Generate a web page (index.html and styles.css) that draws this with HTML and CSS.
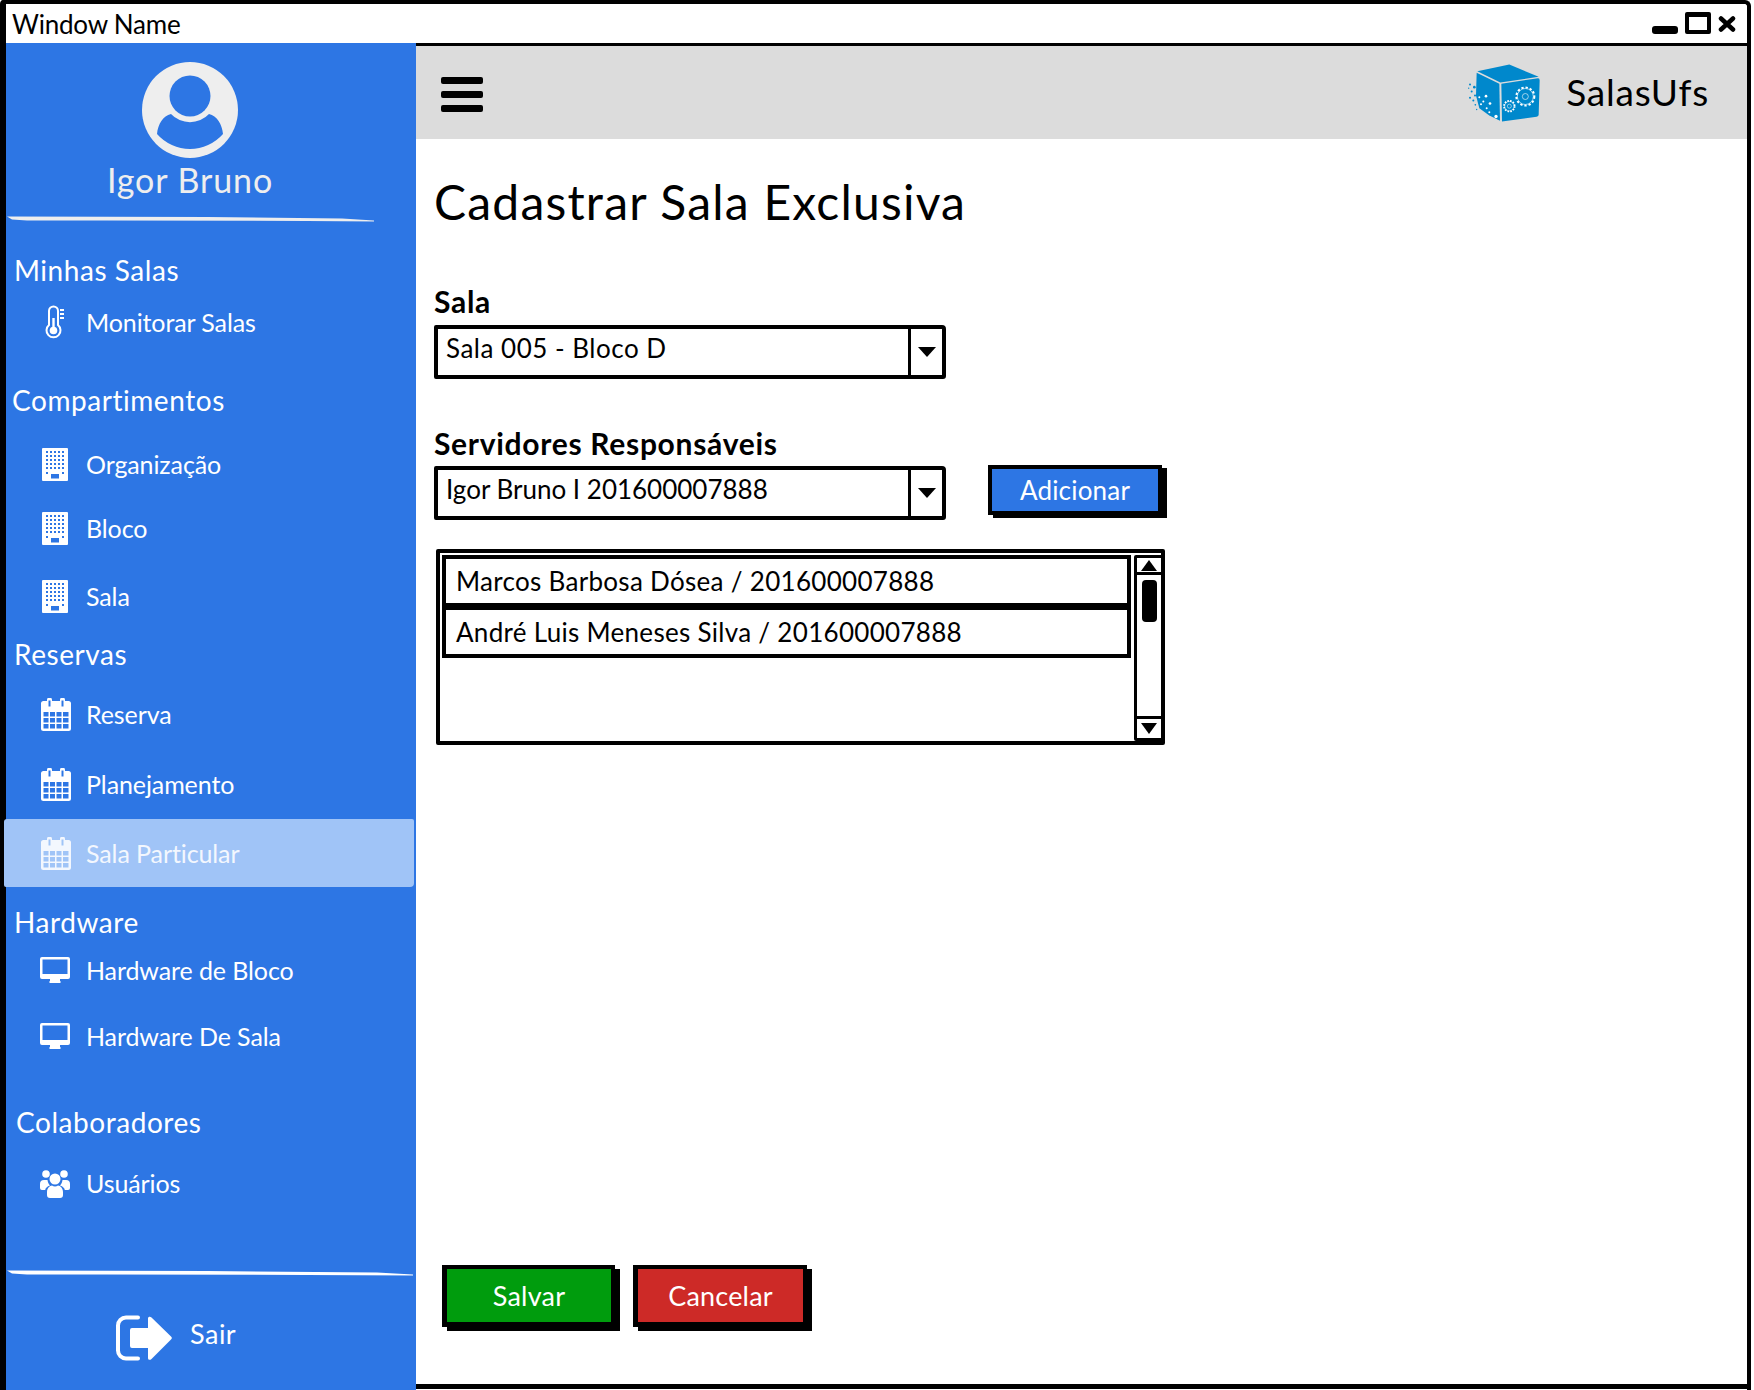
FILE: index.html
```html
<!DOCTYPE html>
<html lang="en">
  <head>
    <meta charset="UTF-8" />
    <title>SalasUfs - Cadastrar Sala Exclusiva</title>
    <link rel="stylesheet" href="styles.css">
  </head>
  <body>
    <svg class="defs" width="0" height="0">
      <defs>
        <pattern id="windows" width="4" height="4" patternUnits="userSpaceOnUse" x="4" y="3">
          <rect width="2" height="2" fill="#2d76e4" />
        </pattern>
      </defs>
      <symbol id="i-thermo" viewBox="0 0 20 34">
        <path d="M3 20V6a4.500 4.500 0 0 1 9 0V20a7 7 0 1 1-9 0z" fill="none" stroke="currentColor" stroke-width="2" />
        <circle cx="7.500" cy="25.500" r="3.800" fill="currentColor" />
        <path d="M7.500 24V13" stroke="currentColor" stroke-width="2.400" />
        <path d="M14 5h4M14 9h4M14 13h4" stroke="currentColor" stroke-width="1.800" />
      </symbol>
      <symbol id="i-building" viewBox="0 0 26 33">
        <rect width="26" height="33" rx="1" fill="currentColor" />
        <rect x="4" y="3" width="18" height="18" fill="url(#windows)" />
        <rect x="4" y="24" width="2" height="2" fill="#2d76e4" />
        <rect x="20" y="24" width="2" height="2" fill="#2d76e4" />
        <rect x="9" y="26" width="8" height="4.500" fill="#2d76e4" />
      </symbol>
      <symbol id="i-calendar" viewBox="0 0 30 33">
        <path fill="currentColor" fill-rule="evenodd" d="M2.500 3H6V2a2 2 0 0 1 5 0V3h8V2a2 2 0 0 1 5 0V3h3.500A2.500 2.500 0 0 1 30 5.500V30.500A2.500 2.500 0 0 1 27.500 33H2.500A2.500 2.500 0 0 1 0 30.500V5.500A2.500 2.500 0 0 1 2.500 3zM7.500 2.500V8.500h2V2.500zM20.500 2.500V8.500h2V2.500zM2.500 14h5v4.500h-5zM9 14h5v4.500H9zM15.500 14h5v4.500h-5zM22 14h5.500v4.500H22zM2.500 20h5v4.500h-5zM9 20h5v4.500H9zM15.500 20h5v4.500h-5zM22 20h5.500v4.500H22zM2.500 26h5v4.500h-5zM9 26h5v4.500H9zM15.500 26h5v4.500h-5zM22 26h5.500v4.500H22z" />
      </symbol>
      <symbol id="i-monitor" viewBox="0 0 30 26">
        <path fill="currentColor" fill-rule="evenodd" d="M2 0H28a2 2 0 0 1 2 2V20a2 2 0 0 1-2 2H20V24h0.500V26h-11V24H10V22H2a2 2 0 0 1-2-2V2a2 2 0 0 1 2-2zM2.500 2.500V17H27.500V2.500z" />
      </symbol>
      <symbol id="i-users" viewBox="0 0 30 28">
        <g fill="currentColor">
          <circle cx="6" cy="4" r="3.800" />
          <circle cx="24" cy="4" r="3.800" />
          <circle cx="15" cy="9" r="5.500" />
          <path d="M0 14a4 4 0 0 1 4-4H7.500C7.800 12 8.500 14 10 15.500 7 16.500 5.500 18 5.200 20H2a2 2 0 0 1-2-2zM30 14a4 4 0 0 0-4-4H22.500C22.200 12 21.500 14 20 15.500 23 16.500 24.500 18 24.800 20H28a2 2 0 0 0 2-2z" />
          <path d="M7 22c0-3.500 2.500-6.500 5-6.500 1.800 1.300 4.200 1.300 6 0 2.500 0 5 3 5 6.500v3a3 3 0 0 1-3 3H10a3 3 0 0 1-3-3z" />
        </g>
      </symbol>
      <symbol id="i-exit" viewBox="0 0 56 46">
        <path d="M22 2.500H10a8 8 0 0 0-8 8V35.500a8 8 0 0 0 8 8H22" fill="none" stroke="currentColor" stroke-width="4" stroke-linecap="round" />
        <path fill="currentColor" d="M16 13H32V3.500C32 1.500 34 1 35.500 2.500L55 21.500a2 2 0 0 1 0 3L35.500 44C34 45.500 32 45 32 43V33H16a2 2 0 0 1-2-2V15a2 2 0 0 1 2-2z" />
      </symbol>
    </svg>

    <div class="window">
      <div class="titlebar">
        <span class="window-name">Window Name</span>
        <div class="window-controls">
          <span class="ctl-min"></span>
          <span class="ctl-max"></span>
          <svg class="ctl-close" viewBox="0 0 18 16" width="18" height="16">
            <path d="M3 2.500L15 13.500M15 2.500L3 13.500" stroke="#000" stroke-width="4.500" stroke-linecap="round" />
          </svg>
        </div>
      </div>

      <div class="window-body">
        <aside class="sidebar">
          <div class="profile">
            <svg class="avatar" viewBox="-48 -48 96 96" width="96" height="96">
              <circle r="48" fill="#eeeeee" />
              <circle cx="0" cy="-14" r="20.500" fill="#2d76e4" />
              <path fill="#2d76e4" d="M-33 24C-32 14-27 6-19 4A26 26 0 0 0 19 4C27 6 32 14 33 24A44 44 0 0 1-33 24Z" />
            </svg>
            <div class="profile-name">Igor Bruno</div>
          </div>
          <svg class="rule" viewBox="0 0 367 6" width="367" height="6" preserveAspectRatio="none">
            <path d="M0 0.500L200 1 335 2.500 367 4.500V5.500L300 5 100 4.500 20 4.500 5 3.500Z" fill="#eeeeee" />
          </svg>

          <nav class="nav">
            <div class="nav-head first">Minhas Salas</div>
            <a class="nav-item mt-14"><svg class="ico ico-thermo"><use href="#i-thermo" /></svg>Monitorar Salas</a>

            <div class="nav-head mt-40 shift-left">Compartimentos</div>
            <a class="nav-item mt-26"><svg class="ico ico-building"><use href="#i-building" /></svg>Organização</a>
            <a class="nav-item mt-24"><svg class="ico ico-building"><use href="#i-building" /></svg>Bloco</a>
            <a class="nav-item mt-28"><svg class="ico ico-building"><use href="#i-building" /></svg>Sala</a>

            <div class="nav-head mt-20">Reservas</div>
            <a class="nav-item mt-22"><svg class="ico"><use href="#i-calendar" /></svg>Reserva</a>
            <a class="nav-item mt-30"><svg class="ico"><use href="#i-calendar" /></svg>Planejamento</a>
            <a class="nav-item active mt-15"><svg class="ico"><use href="#i-calendar" /></svg>Sala Particular</a>

            <div class="nav-head mt-17">Hardware</div>
            <a class="nav-item mt-10"><svg class="ico ico-monitor"><use href="#i-monitor" /></svg>Hardware de Bloco</a>
            <a class="nav-item mt-26"><svg class="ico ico-monitor"><use href="#i-monitor" /></svg>Hardware De Sala</a>

            <div class="nav-head mt-48 shift-right">Colaboradores</div>
            <a class="nav-item mt-23"><svg class="ico ico-users"><use href="#i-users" /></svg>Usuários</a>
          </nav>

          <div class="sidebar-foot">
            <svg class="rule" viewBox="0 0 406 6" width="406" height="6" preserveAspectRatio="none">
              <path d="M0 0.500L200 1 370 2.500 406 4.500V5.500L300 5 100 4.500 20 4.500 5 3.500Z" fill="#ffffff" />
            </svg>
            <a class="logout"><svg class="ico-exit"><use href="#i-exit" /></svg><span class="logout-text">Sair</span></a>
          </div>
        </aside>

        <main class="main">
          <header class="topbar">
            <div class="burger"><span></span><span></span><span></span></div>
            <div class="brand">
              <svg class="brand-logo" viewBox="200 180 225 185" width="75" height="62">
                <path d="M234 207L330 187 418 224 303 241Z" fill="#0088cc" />
                <path d="M232 212L300 245 302 356 270 340 240 318 230 280Z" fill="#0088cc" />
                <path d="M306 245L416 228Q421 228 421 234L418 338Q418 343 412 344L308 358Z" fill="#0088cc" />
                <g fill="#0088cc">
                  <circle cx="225" cy="255" r="4" /><circle cx="212" cy="247" r="3" /><circle cx="217" cy="268" r="3" />
                  <circle cx="212" cy="287" r="3" /><circle cx="222" cy="295" r="3" /><circle cx="227" cy="280" r="3" />
                  <circle cx="228" cy="308" r="2.500" /><circle cx="208" cy="258" r="2" /><circle cx="232" cy="322" r="2" />
                </g>
                <g fill="#ffffff">
                  <circle cx="260" cy="282" r="4" /><circle cx="240" cy="285" r="3" /><circle cx="252" cy="298" r="3" />
                  <circle cx="272" cy="304" r="4" /><circle cx="245" cy="306" r="3" /><circle cx="262" cy="318" r="3" />
                  <circle cx="290" cy="343" r="5" /><circle cx="270" cy="330" r="3" />
                </g>
                <g fill="none" stroke="#ffffff">
                  <circle cx="378" cy="283" r="27" stroke-width="6" stroke-dasharray="7 5.700" />
                  <circle cx="378" cy="283" r="24" stroke-width="1.800" />
                  <circle cx="378" cy="283" r="9" stroke-width="1.800" />
                  <circle cx="330" cy="312" r="16" stroke-width="5" stroke-dasharray="5 3.400" />
                  <circle cx="330" cy="312" r="14" stroke-width="1.600" />
                  <circle cx="330" cy="312" r="6" stroke-width="1.600" />
                </g>
              </svg>
              <span class="brand-name">SalasUfs</span>
            </div>
          </header>

          <div class="content">
            <h1 class="page-title">Cadastrar Sala Exclusiva</h1>

            <div class="field-label label-first">Sala</div>
            <div class="select">
              <span class="select-value wide">Sala 005 - Bloco D</span>
              <span class="select-arrow"></span>
            </div>

            <div class="field-label label-second">Servidores Responsáveis</div>
            <div class="add-row">
              <div class="select">
                <span class="select-value">Igor Bruno I 201600007888</span>
                <span class="select-arrow"></span>
              </div>
              <button class="btn btn-add">Adicionar</button>
            </div>

            <div class="listbox">
              <div class="list-rows">
                <div class="list-row">Marcos Barbosa Dósea / 201600007888</div>
                <div class="list-row">André Luis Meneses Silva / 201600007888</div>
              </div>
              <div class="scrollbar">
                <span class="scroll-btn"><span class="tri-up"></span></span>
                <span class="scroll-thumb"></span>
                <span class="scroll-btn scroll-btn-down"><span class="tri-down"></span></span>
              </div>
            </div>

            <div class="actions">
              <button class="btn btn-green">Salvar</button>
              <button class="btn btn-red">Cancelar</button>
            </div>
          </div>
        </main>
      </div>
    </div>
  </body>
</html>
```

FILE: styles.css
```css
* {
  box-sizing: border-box;
}
html,
body {
  margin: 0;
  padding: 0;
  background: #fff;
}
body {
  font-family: "Lato", "Open Sans", sans-serif;
  color: #000;
  width: 1754px;
  height: 1390px;
  overflow: hidden;
}
.defs {
  position: absolute;
}

/* window frame */
.window {
  width: 1751px;
  height: 1390px;
  display: flex;
  flex-direction: column;
  border-top: 4px solid #000;
  border-left: 6px solid #000;
  border-right: 4px solid #000;
  border-radius: 4px 6px 0 0;
}
.titlebar {
  height: 39px;
  flex: none;
  display: flex;
  align-items: center;
  justify-content: space-between;
  padding: 1px 0 0 6px;
}
.window-name {
  font-size: 26px;
  letter-spacing: -0.2px;
}
.window-controls {
  display: flex;
  align-items: flex-end;
  gap: 7px;
  padding: 0 11px 3px 0;
}
.ctl-min {
  width: 26px;
  height: 8px;
  background: #000;
  border-radius: 3px;
}
.ctl-max {
  width: 26px;
  height: 22px;
  border: 4px solid #000;
  border-top-width: 5px;
  border-radius: 2px;
}
.ctl-close {
  margin-bottom: 2px;
}
.window-body {
  flex: 1;
  display: flex;
  min-height: 0;
}

/* sidebar */
.sidebar {
  width: 410px;
  flex: none;
  background: #2d76e4;
  color: #fff;
  display: flex;
  flex-direction: column;
}
.profile {
  padding-top: 19px;
  height: 173px;
  display: flex;
  flex-direction: column;
  align-items: center;
  margin-left: -42px;
}
.avatar {
  display: block;
}
.profile-name {
  font-size: 34px;
  letter-spacing: 0.9px;
  line-height: 44px;
  color: #eeeeee;
}
.rule {
  display: block;
  flex: none;
  margin-left: 1px;
}
.nav {
  display: flex;
  flex-direction: column;
}
.nav-head {
  height: 36px;
  line-height: 36px;
  font-size: 28px;
  letter-spacing: 0.55px;
  padding-left: 8px;
}
.nav-head.first {
  margin-top: 30px;
}
.shift-left {
  padding-left: 6px;
}
.shift-right {
  padding-left: 10px;
}
.nav-item {
  height: 40px;
  display: flex;
  align-items: center;
  gap: 15px;
  padding-left: 35px;
  font-size: 25px;
  letter-spacing: -0.1px;
  color: #fff;
}
.nav-item.active {
  height: 68px;
  width: 410px;
  margin-left: -2px;
  padding-left: 37px;
  background: #a0c4f7;
  color: #f3f7fe;
  border-radius: 3px 2px 4px 2px;
}
.ico {
  width: 30px;
  height: 33px;
  flex: none;
}
.ico-building {
  margin-left: -1px;
  margin-right: 1px;
}
.ico-thermo {
  height: 34px;
}
.ico-monitor {
  height: 26px;
  margin-left: -1px;
  margin-right: 1px;
}
.ico-users {
  height: 28px;
  margin-top: 2px;
  margin-left: -1px;
  margin-right: 1px;
}
.mt-10 { margin-top: 10px; }
.mt-14 { margin-top: 14px; }
.mt-15 { margin-top: 15px; }
.mt-17 { margin-top: 17px; }
.mt-20 { margin-top: 20px; }
.mt-22 { margin-top: 22px; }
.mt-23 { margin-top: 23px; }
.mt-24 { margin-top: 24px; }
.mt-26 { margin-top: 26px; }
.mt-28 { margin-top: 28px; }
.mt-30 { margin-top: 30px; }
.mt-40 { margin-top: 40px; }
.mt-48 { margin-top: 48px; }

.sidebar-foot {
  margin-top: auto;
  padding-bottom: 28px;
}
.logout {
  display: flex;
  align-items: center;
  gap: 18px;
  height: 48px;
  margin-top: 38px;
  padding-left: 110px;
}
.logout-text {
  font-size: 27px;
  letter-spacing: 0.5px;
  margin-bottom: 9px;
}
.ico-exit {
  width: 56px;
  height: 46px;
  flex: none;
}

/* main */
.main {
  flex: 1;
  min-width: 0;
  display: flex;
  flex-direction: column;
  border-top: 3px solid #000;
  border-bottom: 5px solid #000;
  margin-bottom: 1px;
}
.topbar {
  height: 93px;
  flex: none;
  background: #dcdcdc;
  display: flex;
  align-items: center;
  justify-content: space-between;
  padding: 0 38px 0 25px;
}
.burger {
  width: 42px;
  display: flex;
  flex-direction: column;
  gap: 7px;
  margin-top: 3px;
}
.burger span {
  height: 7px;
  background: #000;
  border-radius: 2px;
}
.brand {
  display: flex;
  align-items: center;
  gap: 25px;
}
.brand-logo {
  display: block;
}
.brand-name {
  font-size: 37px;
  letter-spacing: 0.8px;
  margin-top: -3px;
}

.content {
  flex: 1;
  display: flex;
  flex-direction: column;
  padding: 34px 0 57px 18px;
  min-height: 0;
}
.page-title {
  font-size: 48px;
  letter-spacing: 1.200px;
  font-weight: 400;
  line-height: 58px;
  margin: 0 0 53px;
}
.field-label {
  font-size: 30px;
  letter-spacing: 0.7px;
  font-weight: 700;
  line-height: 34px;
}
.label-first {
  margin-bottom: 1px;
}
.label-second {
  margin-top: 47px;
}
.select {
  width: 512px;
  height: 54px;
  margin-top: 6px;
  display: flex;
  border: 4px solid #000;
  border-radius: 2px 4px 3px 2px;
  flex: none;
}
.select-value {
  flex: 1;
  font-size: 26px;
  line-height: 39px;
  padding-left: 8px;
  border-right: 3px solid #000;
}
.select-value.wide {
  letter-spacing: 0.5px;
}
.select-arrow {
  width: 31px;
  position: relative;
}
.select-arrow::after {
  content: "";
  position: absolute;
  left: 7px;
  top: 18px;
  border-left: 9px solid transparent;
  border-right: 9px solid transparent;
  border-top: 10px solid #000;
}
.add-row {
  display: flex;
  align-items: flex-start;
  gap: 42px;
}
.btn {
  font-family: inherit;
  color: #fff;
  border: 4px solid #000;
  cursor: pointer;
  padding: 0;
  letter-spacing: 0.2px;
}
.btn-add {
  width: 174px;
  height: 50px;
  margin-top: 5px;
  background: #2d76e4;
  font-size: 26px;
  box-shadow: 5px 3px 0 #000;
}
.listbox {
  width: 729px;
  height: 196px;
  margin: 29px 0 0 2px;
  display: flex;
  gap: 3px;
  padding: 2px 0 0 2px;
  border: 4px solid #000;
  border-radius: 2px;
  flex: none;
}
.list-rows {
  flex: 1;
  display: flex;
  flex-direction: column;
}
.list-row {
  height: 52px;
  line-height: 44px;
  font-size: 26px;
  letter-spacing: 0.3px;
  padding-left: 10px;
  border: 4px solid #000;
}
.list-row + .list-row {
  margin-top: -1px;
}
.scrollbar {
  width: 30px;
  margin-right: -3px;
  display: flex;
  flex-direction: column;
  align-items: center;
  border: 3px solid #000;
  border-radius: 2px;
}
.scroll-btn {
  width: 100%;
  height: 17px;
  flex: none;
  border-bottom: 3px solid #000;
  display: flex;
  align-items: center;
  justify-content: center;
}
.scroll-btn-down {
  margin-top: auto;
  height: 22px;
  border-bottom: 0;
  border-top: 3px solid #000;
}
.tri-up,
.tri-down {
  border-left: 8px solid transparent;
  border-right: 8px solid transparent;
}
.tri-up {
  border-bottom: 11px solid #000;
}
.tri-down {
  border-top: 11px solid #000;
}
.scroll-thumb {
  width: 15px;
  height: 42px;
  margin-top: 5px;
  background: #000;
  border-radius: 4px;
}
.actions {
  margin-top: auto;
  margin-left: 8px;
  display: flex;
  gap: 18px;
}
.btn-green,
.btn-red {
  height: 62px;
  width: 173px;
  font-size: 27px;
  border-width: 4px 4px 5px 5px;
  box-shadow: 5px 4px 0 #000;
}
.btn-green {
  background: #009c0d;
}
.btn-red {
  width: 174px;
  background: #cd2a27;
}
```
